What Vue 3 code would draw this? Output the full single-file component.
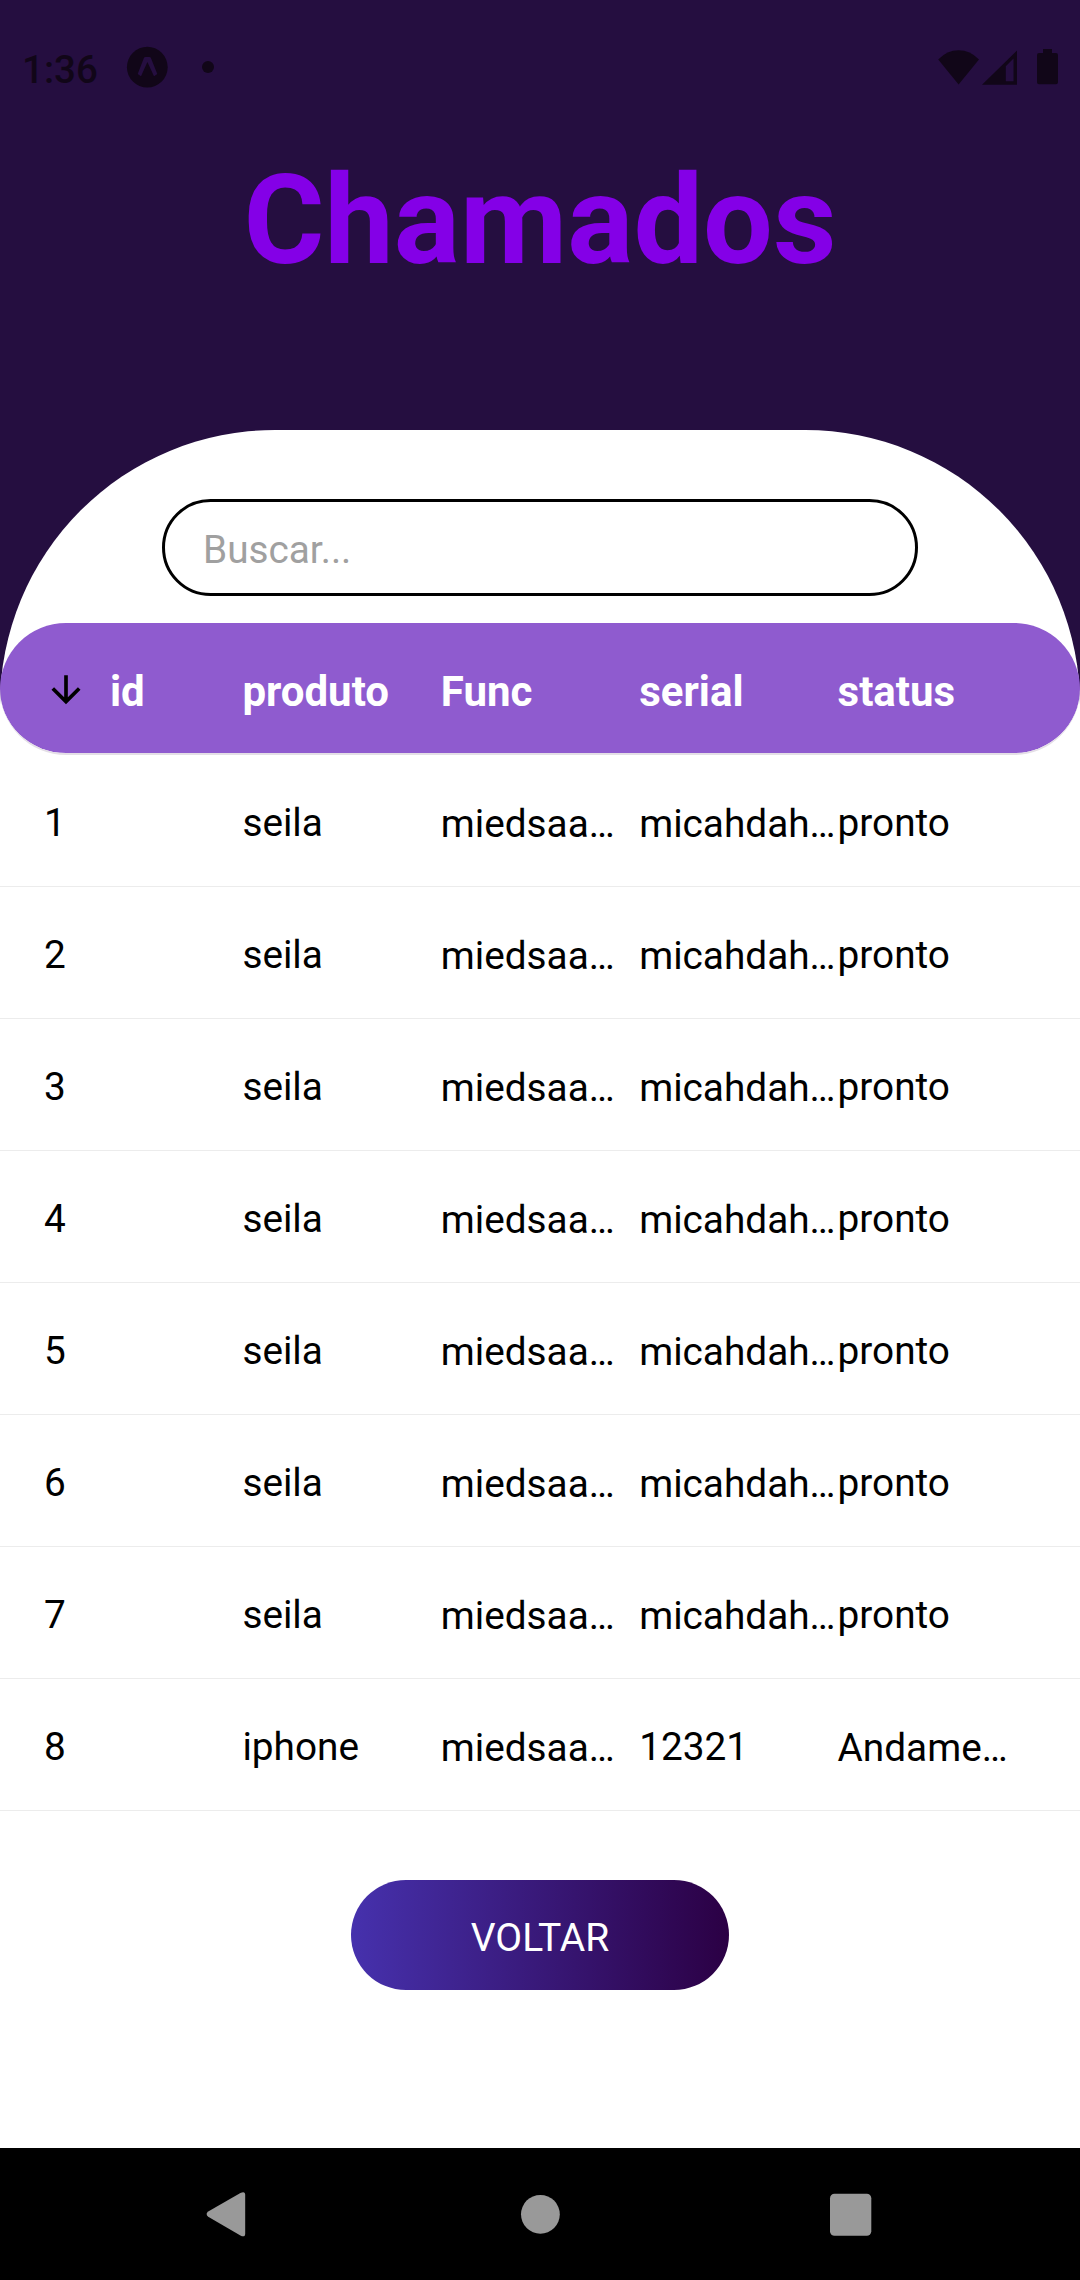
<script setup>
const columns = ['id', 'produto', 'Func', 'serial', 'status']

const rows = Array.from({ length: 7 }, (_, i) => [
  String(i + 1), 'seila', 'miedsaa…', 'micahdah…', 'pronto',
])
rows.push(['8', 'iphone', 'miedsaa…', '12321', 'Andame…'])
</script>

<template>
  <div class="screen">
    <header class="status-bar">
      <span class="clock">1:36</span>
      <svg class="app-icon" width="42" height="42" viewBox="0 0 42 42">
        <circle cx="21.300" cy="21.200" r="20.400" fill="#110618" />
        <path d="M17.900 12 Q18.300 11 19.500 11 H23.300 Q24.500 11 24.900 12 L31.300 28 L28 30.300 L21.400 16 L15 30.300 L11.700 28 Z" fill="#250e40" />
      </svg>
      <span class="dot"></span>
      <svg class="signals" width="124" height="40" viewBox="936 47 124 40" fill="#110618">
        <path d="M958.6 84.4 L938.2 59.4 Q947 50.2 958.6 50.2 Q970.200 50.2 979 59.4 Z" />
        <path fill-rule="evenodd" d="M982 84.700 L1017 50.500 V84.700 Z M1005.800 66.300 V81.200 H1013.500 V58.600 Z" />
        <path d="M1043 49 H1052 V53 H1056 Q1058 53 1058 55 V82.300 Q1058 84.300 1056 84.300 H1039 Q1037 84.300 1037 82.300 V55 Q1037 53 1039 53 H1043 Z" />
      </svg>
    </header>

    <h1 class="title">Chamados</h1>

    <main class="panel">
      <input class="search" type="text" placeholder="Buscar..." />

      <div class="table">
        <div class="row head">
          <div v-for="(name, i) in columns" :key="name" class="cell">
            <svg v-if="i === 0" class="arrow" width="44" height="44" viewBox="0 0 24 24">
              <path d="M11,4H13V16L18.5,10.5L19.92,11.92L12,19.84L4.08,11.92L5.5,10.5L11,16V4Z" />
            </svg>
            <span>{{ name }}</span>
          </div>
        </div>
        <div v-for="row in rows" :key="row[0]" class="row body">
          <div v-for="(text, i) in row" :key="i" class="cell" :class="{ clipped: text.endsWith('…') }">{{ text }}</div>
        </div>
      </div>

      <button class="back" type="button">VOLTAR</button>
    </main>

    <nav class="nav-bar">
      <svg width="312" height="48" viewBox="208 0 312 48" fill="#999">
        <path d="M208.200 21.600 L240.400 3 Q245.200 0.600 245.200 5 V43.400 Q245.200 47.800 240.400 45.400 L208.200 26.800 Q205 24.200 208.200 21.600 Z" />
      </svg>
      <svg width="40" height="48" viewBox="0 0 40 48" fill="#999">
        <circle cx="20.400" cy="24.300" r="19.400" />
      </svg>
      <svg width="312" height="48" viewBox="560 0 312 48" fill="#999">
        <rect x="830" y="3.700" width="41.300" height="42" rx="4.500" />
      </svg>
    </nav>
  </div>
</template>

<style>
body {
  margin: 0;
}
</style>

<style scoped>
.screen {
  width: 1080px;
  height: 2280px;
  display: flex;
  flex-direction: column;
  background: #250e40;
  font-family: Roboto, sans-serif;
  overflow: hidden;
}

.status-bar {
  box-sizing: border-box;
  flex: none;
  height: 134px;
  padding: 0 20px 0 22px;
  display: flex;
  align-items: center;
  color: #110618;
}

.clock {
  width: 104px;
  padding-top: 4px;
  font-size: 38.5px;
  font-weight: 500;
}

.dot {
  width: 12px;
  height: 12px;
  margin-left: 34px;
  border-radius: 50%;
  background: #110618;
}

.signals {
  margin-left: auto;
}

.title {
  flex: none;
  height: 145px;
  margin: 14px 0 137px;
  color: #8400e7;
  font-size: 123.75px;
  font-weight: 700;
  line-height: 145px;
  text-align: center;
}

.panel {
  flex: none;
  height: 1718px;
  display: flex;
  flex-direction: column;
  align-items: center;
  background: #fff;
  border-radius: 275px 275px 0 0;
}

.search {
  box-sizing: border-box;
  flex: none;
  width: 756px;
  height: 97px;
  margin: 69px 0 27px;
  padding: 4px 39px 0 38px;
  border: 3px solid #000;
  border-radius: 49px;
  outline: none;
  background: transparent;
  font-family: inherit;
  font-size: 38.75px;
}

.search::placeholder {
  color: #a0a0a0;
}

.table {
  width: 1080px;
}

.row {
  box-sizing: border-box;
  height: 132px;
  padding: 0 44px;
  display: flex;
  border-bottom: 1px solid #ececec;
  color: #000;
  font-size: 38.75px;
}

.cell {
  box-sizing: border-box;
  width: 198.4px;
  padding-top: 4px;
  display: flex;
  align-items: center;
  white-space: nowrap;
}

.cell.clipped {
  padding-top: 6px;
}

.head {
  border-bottom: 2px solid #e4dfe6;
  border-radius: 66px;
  background: #8f5bcf;
  background-clip: padding-box;
  color: #fff;
  font-size: 42px;
  font-weight: 700;
}

.head .cell {
  padding-top: 3px;
}

.head span {
  padding-top: 4px;
}

.arrow {
  margin: 0 22px 0 0;
  fill: #000;
}

.back {
  flex: none;
  width: 378px;
  height: 110px;
  margin-top: 69px;
  padding: 5px 0 0;
  border: 0;
  border-radius: 55px;
  background: linear-gradient(90deg, #4631ad, #2b0044);
  color: #fff;
  font-family: inherit;
  font-size: 39px;
}

.nav-bar {
  flex: none;
  height: 132px;
  padding: 0 208px;
  display: flex;
  align-items: center;
  justify-content: space-between;
  background: #000;
}

.nav-bar svg {
  overflow: visible;
}
</style>
